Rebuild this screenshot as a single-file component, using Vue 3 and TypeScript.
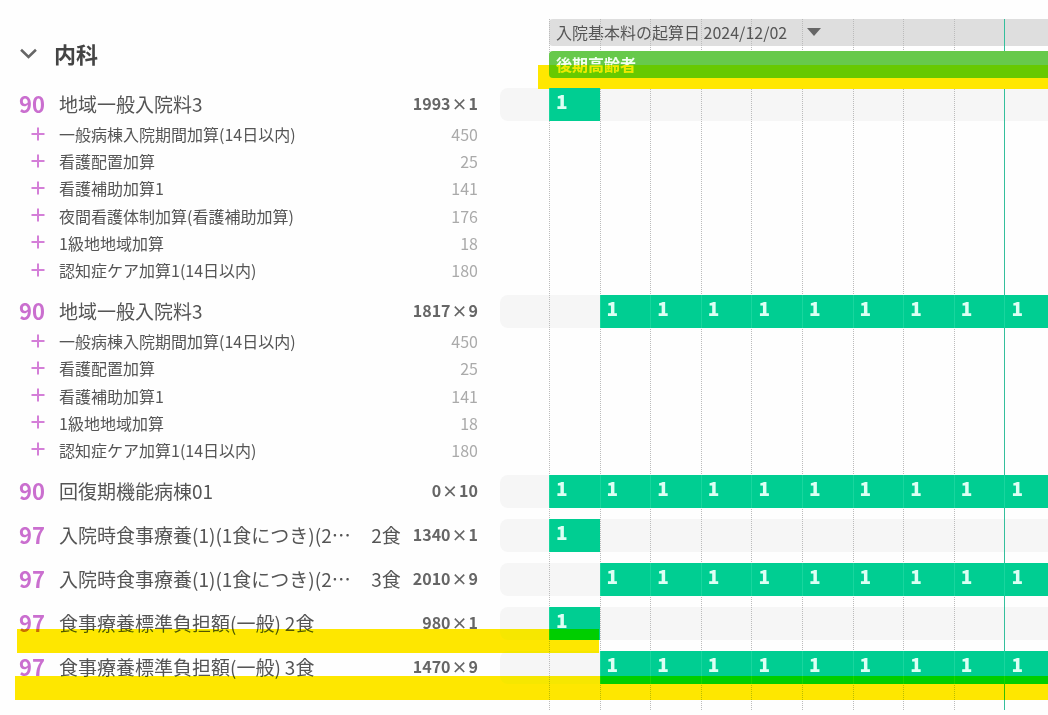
<script setup lang="ts">
import { ref } from 'vue'

interface SubItem {
  name: string
  points: number
}

interface Item {
  code: number
  name: string
  meals?: string
  mealsInline?: boolean
  points: number
  times: number
  firstDay: number
  days: number
  marker?: 'first' | 'full'
  subs?: SubItem[]
}

const DAYS = 10
const open = ref(true)

const items: Item[] = [
  {
    code: 90, name: '地域一般入院料3', points: 1993, times: 1, firstDay: 0, days: 1,
    subs: [
      { name: '一般病棟入院期間加算(14日以内)', points: 450 },
      { name: '看護配置加算', points: 25 },
      { name: '看護補助加算1', points: 141 },
      { name: '夜間看護体制加算(看護補助加算)', points: 176 },
      { name: '1級地地域加算', points: 18 },
      { name: '認知症ケア加算1(14日以内)', points: 180 },
    ],
  },
  {
    code: 90, name: '地域一般入院料3', points: 1817, times: 9, firstDay: 1, days: 9,
    subs: [
      { name: '一般病棟入院期間加算(14日以内)', points: 450 },
      { name: '看護配置加算', points: 25 },
      { name: '看護補助加算1', points: 141 },
      { name: '1級地地域加算', points: 18 },
      { name: '認知症ケア加算1(14日以内)', points: 180 },
    ],
  },
  { code: 90, name: '回復期機能病棟01', points: 0, times: 10, firstDay: 0, days: 10 },
  { code: 97, name: '入院時食事療養(1)(1食につき)(2…', meals: '2食', points: 1340, times: 1, firstDay: 0, days: 1 },
  { code: 97, name: '入院時食事療養(1)(1食につき)(2…', meals: '3食', points: 2010, times: 9, firstDay: 1, days: 9 },
  { code: 97, name: '食事療養標準負担額(一般)', meals: '2食', mealsInline: true, points: 980, times: 1, firstDay: 0, days: 1, marker: 'first' },
  { code: 97, name: '食事療養標準負担額(一般)', meals: '3食', mealsInline: true, points: 1470, times: 9, firstDay: 1, days: 9, marker: 'full' },
]

const hasCell = (item: Item, day: number): boolean =>
  day >= item.firstDay && day < item.firstDay + item.days
</script>

<template>
  <main class="sheet" lang="ja">
    <header class="row head">
      <button class="group" type="button" :aria-expanded="open" @click="open = !open">
        <svg class="chevron" viewBox="0 0 16 10" aria-hidden="true">
          <path d="M1 1.500 L8 8.300 L15 1.500" />
        </svg>
        <span>内科</span>
      </button>
      <div class="bars">
        <button class="start-date" type="button">
          <span>入院基本料の起算日 2024/12/02</span>
          <svg class="caret" viewBox="0 0 14 8" aria-hidden="true"><path d="M0 0H14L7 8Z" /></svg>
        </button>
        <div class="insured">
          後期高齢者
          <i class="marker marker-head"></i>
        </div>
      </div>
    </header>

    <template v-if="open">
      <section v-for="(item, i) in items" :key="i" class="item" :class="{ detailed: item.subs }">
        <div class="row">
          <div class="label">
            <b class="code">{{ item.code }}</b>
            <span class="name" :class="{ inline: item.mealsInline }">{{ item.name }}</span>
            <span v-if="item.meals" class="meals" :class="{ inline: item.mealsInline }">{{ item.meals }}</span>
            <b class="count"><span>{{ item.points }}</span><span>×</span><span>{{ item.times }}</span></b>
          </div>
          <div class="track">
            <div class="days">
              <div v-for="d in DAYS" :key="d" :class="{ cell: hasCell(item, d - 1) }">{{ hasCell(item, d - 1) ? 1 : '' }}</div>
            </div>
          </div>
          <i v-if="item.marker" class="marker" :class="`marker-${item.marker}`"></i>
        </div>
        <ul v-if="item.subs" class="subs">
          <li v-for="sub in item.subs" :key="sub.name">
            <svg class="plus" viewBox="0 0 14 14" aria-hidden="true"><path d="M7 0.500V13.500M0.500 7H13.500" /></svg>
            <span class="sub-name">{{ sub.name }}</span>
            <span class="sub-points">{{ sub.points }}</span>
          </li>
        </ul>
      </section>
    </template>

    <div class="lines" aria-hidden="true">
      <div class="days">
        <div v-for="d in DAYS" :key="d" class="line" :class="{ today: d === DAYS }"></div>
      </div>
    </div>
  </main>
</template>

<style>
body {
  margin: 0;
  background: #fefefe;
}
</style>

<style scoped>
.sheet {
  position: relative;
  padding: 19px 0 26px;
  overflow: hidden;
  background: #fefefe;
  color: #555;
  font-family: "Noto Sans CJK JP", sans-serif;
  font-size: 16px;
}

button {
  border: 0;
  padding: 0;
  background: none;
  color: inherit;
  font: inherit;
  text-align: left;
  cursor: pointer;
}

.row {
  position: relative;
  display: grid;
  grid-template-columns: 500px minmax(0, 1fr);
}

.head {
  height: 69px;
}

.group {
  display: flex;
  align-items: center;
  align-self: start;
  gap: 17px;
  padding: 18px 0 0 20px;
  color: #444;
  font-size: 22px;
  font-weight: 700;
  line-height: 32px;
}

.chevron {
  width: 17px;
  height: 11px;
  fill: none;
  stroke: #666;
  stroke-width: 2.4;
}

.bars {
  display: flex;
  flex-direction: column;
  gap: 5px;
  padding-left: 49px;
}

.start-date {
  display: flex;
  align-items: center;
  gap: 20px;
  padding-left: 7px;
  border-radius: 4px 0 0 4px;
  background: #dedede;
  line-height: 27px;
}

.caret {
  width: 14px;
  height: 8px;
  margin-bottom: 2px;
  fill: #666;
}

.insured {
  position: relative;
  z-index: 2;
  padding-left: 7px;
  border-radius: 4px 0 0 4px;
  background: #67c94b;
  color: #f2fff0;
  font-weight: 700;
  line-height: 27px;
}

.item {
  margin-bottom: 11px;
}

.item:last-of-type {
  margin-bottom: 0;
}

.item.detailed {
  margin-bottom: 10px;
}

.label {
  display: flex;
  align-items: center;
  align-self: start;
  padding: 0 22px 0 19px;
  line-height: 31px;
  white-space: nowrap;
}

.code {
  flex: 0 0 40px;
  color: #ca6fcf;
  font-size: 22px;
}

.name,
.meals {
  font-size: 19px;
}

.name {
  flex: 1;
}

.name.inline {
  flex: none;
  margin-right: 4px;
}

.meals.inline {
  flex: 1;
}

.count {
  display: flex;
  gap: 1px;
  margin-left: 12px;
  color: #666;
}

.track {
  height: 33px;
  padding-left: 49px;
  border-radius: 8px 0 0 8px;
  background: #f6f6f6;
}

.days {
  display: grid;
  grid-template-columns: repeat(10, minmax(0, 1fr));
  width: calc(100% + 7px);
  height: 100%;
}

.cell {
  position: relative;
  z-index: 2;
  padding-left: 6px;
  border-left: 1px solid #19d69e;
  background: #00ce92;
  color: #dcfff4;
  font-size: 19px;
  font-weight: 900;
  line-height: 26px;
}

.subs {
  width: 459px;
  margin: 0;
  padding: 0 0 1px 19px;
  list-style: none;
}

.subs li {
  display: flex;
  align-items: center;
  line-height: 1.7;
}

.plus {
  width: 14px;
  height: 14px;
  margin: 0 14px 2px 12px;
  fill: none;
  stroke: #d47fd8;
  stroke-width: 2;
}

.sub-name {
  flex: 1;
}

.sub-points {
  color: #aaa;
}

.lines {
  position: absolute;
  z-index: 1;
  inset: 19px 0 0 549px;
  pointer-events: none;
}

.line {
  border-left: 1px dotted #bbb;
}

.line.today {
  border-left: 1px solid #34bf9c;
}

.marker {
  position: absolute;
  z-index: 3;
  height: 24px;
  background: #ffe700;
  mix-blend-mode: darken;
  pointer-events: none;
}

.marker-head {
  top: 14px;
  right: 0;
  left: -11px;
}

.marker-first {
  top: 22px;
  left: 17px;
  width: 582px;
}

.marker-full {
  top: 25px;
  right: 0;
  left: 15px;
}
</style>
